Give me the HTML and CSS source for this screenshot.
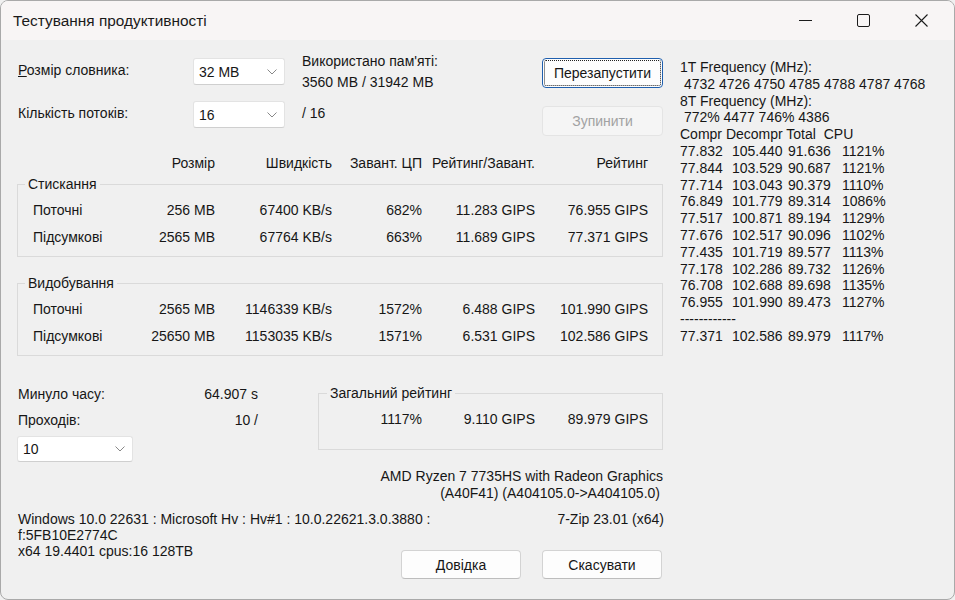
FILE: index.html
```html
<!DOCTYPE html>
<html lang="uk">
<head>
<meta charset="utf-8">
<title>Тестування продуктивності</title>
<link rel="stylesheet" href="styles.css">
</head>
<body>
<div class="window">
  <div class="titlebar">
    <div class="title">Тестування продуктивності</div>
    <div class="caption">
      <span class="cap-btn"><svg width="13" height="13" viewBox="0 0 13 13"><path d="M0 6.5H13" stroke="#1b1b1b" stroke-width="1"/></svg></span>
      <span class="cap-btn"><svg width="13" height="13" viewBox="0 0 13 13"><rect x="0.5" y="0.5" width="12" height="12" rx="1.5" fill="none" stroke="#1b1b1b" stroke-width="1"/></svg></span>
      <span class="cap-btn"><svg width="13" height="13" viewBox="0 0 13 13"><path d="M0.5 0.5L12.5 12.5M12.5 0.5L0.5 12.5" stroke="#1b1b1b" stroke-width="1.1"/></svg></span>
    </div>
  </div>
  <div class="content">
    <div class="main">
      <div class="top">
        <div class="lbl"><u>Р</u>озмір словника:</div>
        <div class="combo"><span>32 MB</span><svg class="chev" width="10" height="6" viewBox="0 0 10 6"><path d="M0.5 0.5L5 5L9.5 0.5" fill="none" stroke="#888" stroke-width="1"/></svg></div>
        <div class="mem"><div>Використано пам'яті:</div><div>3560 MB / 31942 MB</div></div>
        <button class="btn btn-focus">Перезапустити</button>
        <div class="lbl">Кількість потоків:</div>
        <div class="combo"><span>16</span><svg class="chev" width="10" height="6" viewBox="0 0 10 6"><path d="M0.5 0.5L5 5L9.5 0.5" fill="none" stroke="#888" stroke-width="1"/></svg></div>
        <div class="threads">/ 16</div>
        <button class="btn btn-disabled" disabled>Зупинити</button>
      </div>

      <div class="cols head">
        <span></span><span>Розмір</span><span>Швидкість</span><span>Завант. ЦП</span><span>Рейтинг/Завант.</span><span>Рейтинг</span>
      </div>

      <fieldset class="group">
        <legend>Стискання</legend>
        <div class="rows">
          <div class="cols row"><span class="name">Поточні</span><span>256 MB</span><span>67400 KB/s</span><span>682%</span><span>11.283 GIPS</span><span>76.955 GIPS</span></div>
          <div class="cols row"><span class="name">Підсумкові</span><span>2565 MB</span><span>67764 KB/s</span><span>663%</span><span>11.689 GIPS</span><span>77.371 GIPS</span></div>
        </div>
      </fieldset>

      <fieldset class="group group2">
        <legend>Видобування</legend>
        <div class="rows">
          <div class="cols row"><span class="name">Поточні</span><span>2565 MB</span><span>1146339 KB/s</span><span>1572%</span><span>6.488 GIPS</span><span>101.990 GIPS</span></div>
          <div class="cols row"><span class="name">Підсумкові</span><span>25650 MB</span><span>1153035 KB/s</span><span>1571%</span><span>6.531 GIPS</span><span>102.586 GIPS</span></div>
        </div>
      </fieldset>

      <div class="lower">
        <div class="passes">
          <div class="kv"><span>Минуло часу:</span><span>64.907 s</span></div>
          <div class="kv kv2"><span>Проходів:</span><span>10 /</span></div>
          <div class="combo combo-wide"><span>10</span><svg class="chev" width="10" height="6" viewBox="0 0 10 6"><path d="M0.5 0.5L5 5L9.5 0.5" fill="none" stroke="#888" stroke-width="1"/></svg></div>
        </div>
        <fieldset class="group total">
          <legend>Загальний рейтинг</legend>
          <div class="total-row"><span>1117%</span><span>9.110 GIPS</span><span>89.979 GIPS</span></div>
        </fieldset>
      </div>

      <div class="cpu">
        <div>AMD Ryzen 7 7735HS with Radeon Graphics</div>
        <div class="cpu2">(A40F41) (A404105.0-&gt;A404105.0)</div>
      </div>

      <div class="sys1"><span>Windows 10.0 22631 : Microsoft Hv : Hv#1 : 10.0.22621.3.0.3880 :</span><span class="zip">7-Zip 23.01 (x64)</span></div>
      <div class="sys2">
        <div class="sys-lines"><div>f:5FB10E2774C</div><div>x64 19.4401 cpus:16 128TB</div></div>
        <div class="buttons"><button class="btn">Довідка</button><button class="btn">Скасувати</button></div>
      </div>
    </div>

    <div class="side">
      <div class="line">1T Frequency (MHz):</div>
      <div class="line pre"> 4732 4726 4750 4785 4788 4787 4768</div>
      <div class="line">8T Frequency (MHz):</div>
      <div class="line pre"> 772% 4477 746% 4386</div>
      <div class="line pre">Compr Decompr Total  CPU</div>
      <div class="drow"><span>77.832</span><span>105.440</span><span>91.636</span><span>1121%</span></div>
      <div class="drow"><span>77.844</span><span>103.529</span><span>90.687</span><span>1121%</span></div>
      <div class="drow"><span>77.714</span><span>103.043</span><span>90.379</span><span>1110%</span></div>
      <div class="drow"><span>76.849</span><span>101.779</span><span>89.314</span><span>1086%</span></div>
      <div class="drow"><span>77.517</span><span>100.871</span><span>89.194</span><span>1129%</span></div>
      <div class="drow"><span>77.676</span><span>102.517</span><span>90.096</span><span>1102%</span></div>
      <div class="drow"><span>77.435</span><span>101.719</span><span>89.577</span><span>1113%</span></div>
      <div class="drow"><span>77.178</span><span>102.286</span><span>89.732</span><span>1126%</span></div>
      <div class="drow"><span>76.708</span><span>102.688</span><span>89.698</span><span>1135%</span></div>
      <div class="drow"><span>76.955</span><span>101.990</span><span>89.473</span><span>1127%</span></div>
      <div class="line sep">------------</div>
      <div class="drow"><span>77.371</span><span>102.586</span><span>89.979</span><span>1117%</span></div>
    </div>
  </div>
</div>
</body>
</html>
```

FILE: styles.css
```css
html, body {
  margin: 0;
  background: #f0f0f0;
}
body {
  font-family: "Liberation Sans", Arial, sans-serif;
  font-size: 14px;
  color: #161616;
}
.window {
  width: 955px;
  height: 600px;
  box-sizing: border-box;
  border: 1px solid #a9a9a9;
  border-radius: 8px;
  background: #f0f0f0;
  overflow: hidden;
}
.titlebar {
  height: 39px;
  display: flex;
  align-items: center;
  justify-content: space-between;
  background: #f8f5f5;
}
.title {
  padding-left: 12px;
  font-size: 15.4px;
  color: #1a1a1a;
}
.caption {
  display: flex;
  height: 100%;
  padding-right: 4px;
}
.cap-btn {
  width: 58px;
  display: flex;
  align-items: center;
  justify-content: center;
}
.cap-btn svg { display: block; }

.content {
  display: flex;
  align-items: flex-start;
}
.main {
  width: 646px;
  padding-left: 16px;
}

/* top controls */
.top {
  margin-top: 18px;
  display: grid;
  grid-template-columns: 176px 92px 257px 121px;
  grid-template-rows: 30px 35px;
  row-gap: 13px;
  align-items: start;
}
.lbl, .threads {
  line-height: 24px;
  padding-left: 1px;
}
.threads { padding-left: 17px; }
.mem {
  padding-left: 17px;
  margin-top: -7px;
  line-height: 21px;
}
.combo {
  height: 27px;
  box-sizing: border-box;
  display: flex;
  align-items: center;
  justify-content: space-between;
  padding: 0 7px 0 5px;
  background: #fff;
  border: 1px solid #e3e3e3;
  border-bottom-color: #cfcfcf;
  border-radius: 3px;
}
.chev { display: block; }

.btn {
  font-family: inherit;
  font-size: 14px;
  color: #161616;
  height: 30px;
  box-sizing: border-box;
  background: #fdfdfd;
  border: 1px solid #d3d3d3;
  border-bottom-color: #bdbdbd;
  border-radius: 4px;
  padding: 0;
}
.btn-focus {
  border: 1px solid #1f5fae;
  outline: 1px dotted #222;
  outline-offset: -3px;
}
.btn-disabled {
  margin-top: 5px;
  background: #f5f5f5;
  border: 1px solid #e4e4e4;
  color: #a2a2a2;
}

/* table */
.cols {
  display: grid;
  grid-template-columns: 130px 68px 117px 90px 113px 113px;
}
.cols > span { text-align: right; white-space: nowrap; }
.cols > span.name { text-align: left; padding-left: 15px; }
.head {
  margin-top: 17px;
  line-height: 20px;
}
.group {
  margin: 2px 0 0 0;
  padding: 0 0 5px 0;
  border: 1px solid #dadada;
  min-inline-size: 0;
}
.group legend {
  margin-left: 7px;
  padding: 0 3px;
  line-height: 18px;
}
.rows { margin-top: 4px; }
.row {
  line-height: 27px;
  grid-template-columns: 129px 68px 117px 90px 113px 113px;
}
.group2 { margin-top: 17px; }

/* lower */
.lower {
  margin-top: 28px;
  display: flex;
  align-items: flex-start;
}
.passes { width: 301px; }
.kv {
  display: grid;
  grid-template-columns: 241px;
  line-height: 20px;
}
.kv span:first-child { grid-column: 1; grid-row: 1; padding-left: 1px; }
.kv span:last-child { grid-column: 1; grid-row: 1; text-align: right; }
.kv2 { margin-top: 6px; }
.combo-wide {
  width: 116px;
  height: 26px;
  margin-top: 6px;
}
.total {
  width: 345px;
  box-sizing: border-box;
  margin: 0;
  padding: 0 0 16px 0;
}
.total legend { margin-left: 8px; }
.total-row {
  margin-top: 4px;
  display: grid;
  grid-template-columns: 103px 113px 113px;
  line-height: 27px;
}
.total-row span { text-align: right; }

.cpu {
  margin-top: 6px;
  text-align: right;
  line-height: 17px;
}
.cpu2 { padding-right: 3px; }
.sys1 {
  margin-top: 9px;
  display: flex;
  justify-content: space-between;
  line-height: 16px;
  padding-left: 1px;
}
.zip { margin-right: -1px; }
.sys2 {
  display: flex;
  justify-content: space-between;
  align-items: flex-start;
  line-height: 16px;
  padding-left: 1px;
}
.buttons {
  margin-top: 23px;
  display: flex;
  gap: 21px;
  margin-right: 1px;
}
.buttons .btn {
  width: 120px;
  height: 29px;
}

/* side */
.side {
  margin-left: 17px;
  margin-top: 19px;
  line-height: 16.8px;
}
.line { white-space: pre; }
.drow {
  display: grid;
  grid-template-columns: 52px 56px 54px auto;
  white-space: nowrap;
}
```
